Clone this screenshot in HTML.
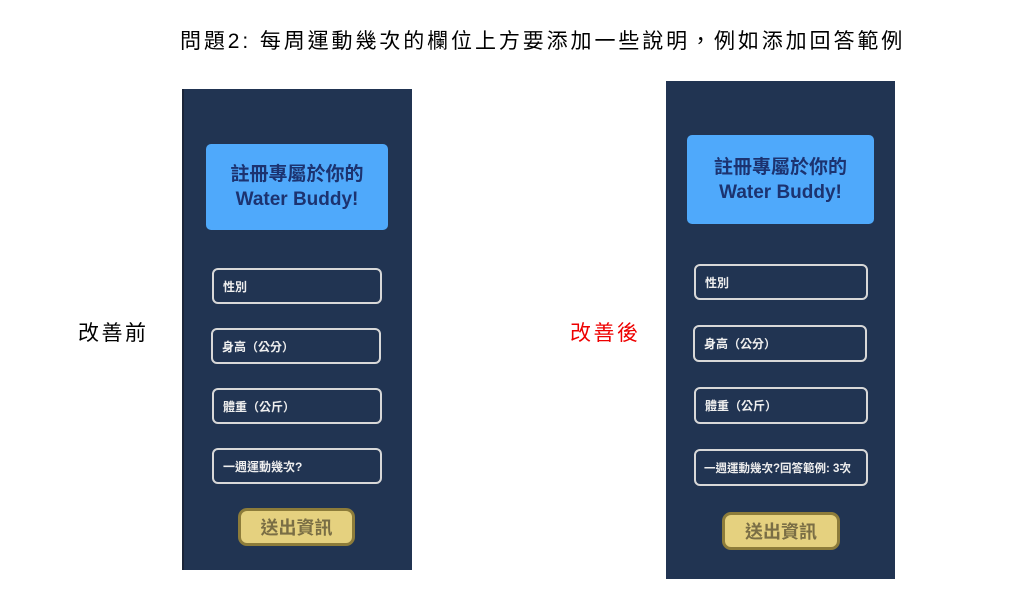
<!DOCTYPE html>
<html><head><meta charset="utf-8"><style>
body{margin:0;width:1013px;height:595px;background:#fff;position:relative;overflow:hidden;font-family:"Liberation Sans","Noto Sans CJK TC",sans-serif}
.a{position:absolute}
.panel{position:absolute;background:#213452}
.title{position:absolute;background:#4fa9fb;border-radius:5px;color:#1c3370;font-weight:bold;font-size:19px;line-height:25px;text-align:center;display:flex;flex-direction:column;justify-content:center}
.f{position:absolute;border:2px solid #d8d8d8;border-radius:6px;box-sizing:border-box;color:#eee;font-size:12px;font-weight:bold;display:flex;align-items:center;padding-left:9px;white-space:nowrap}
.btn{position:absolute;background:#e5d17f;border:3px solid #8d7c3a;border-radius:9px;box-sizing:border-box;color:#7a6e45;font-size:18px;font-weight:bold;display:flex;align-items:center;justify-content:center}
</style></head><body>
<div class="a" style="left:180px;top:25px;font-size:21px;letter-spacing:2.9px;color:#000;white-space:nowrap">問題2: 每周運動幾次的欄位上方要添加一些說明，例如添加回答範例</div>
<div class="a" style="left:78px;top:317px;font-size:21px;letter-spacing:2.5px">改善前</div>
<div class="a" style="left:570px;top:317px;font-size:21px;letter-spacing:2.5px;color:#e00">改善後</div>

<div class="panel" style="left:182px;top:89px;width:228px;height:481px;border-left:2px solid #1a2438"></div>
<div class="title" style="left:206px;top:144px;width:182px;height:86px">註冊專屬於你的<br>Water Buddy!</div>
<div class="f" style="left:212px;top:268px;width:170px;height:36px">性別</div>
<div class="f" style="left:211px;top:328px;width:170px;height:36px">身高（公分）</div>
<div class="f" style="left:212px;top:388px;width:170px;height:36px">體重（公斤）</div>
<div class="f" style="left:212px;top:448px;width:170px;height:36px">一週運動幾次?</div>
<div class="btn" style="left:238px;top:508px;width:117px;height:38px">送出資訊</div>

<div class="panel" style="left:666px;top:81px;width:229px;height:498px"></div>
<div class="title" style="left:687px;top:135px;width:187px;height:89px">註冊專屬於你的<br>Water Buddy!</div>
<div class="f" style="left:694px;top:264px;width:174px;height:36px">性別</div>
<div class="f" style="left:693px;top:325px;width:174px;height:37px">身高（公分）</div>
<div class="f" style="left:694px;top:387px;width:174px;height:37px">體重（公斤）</div>
<div class="f" style="left:694px;top:449px;width:174px;height:37px;padding-left:8px;font-size:11.5px">一週運動幾次?回答範例: 3次</div>
<div class="btn" style="left:722px;top:512px;width:118px;height:38px">送出資訊</div>
</body></html>
